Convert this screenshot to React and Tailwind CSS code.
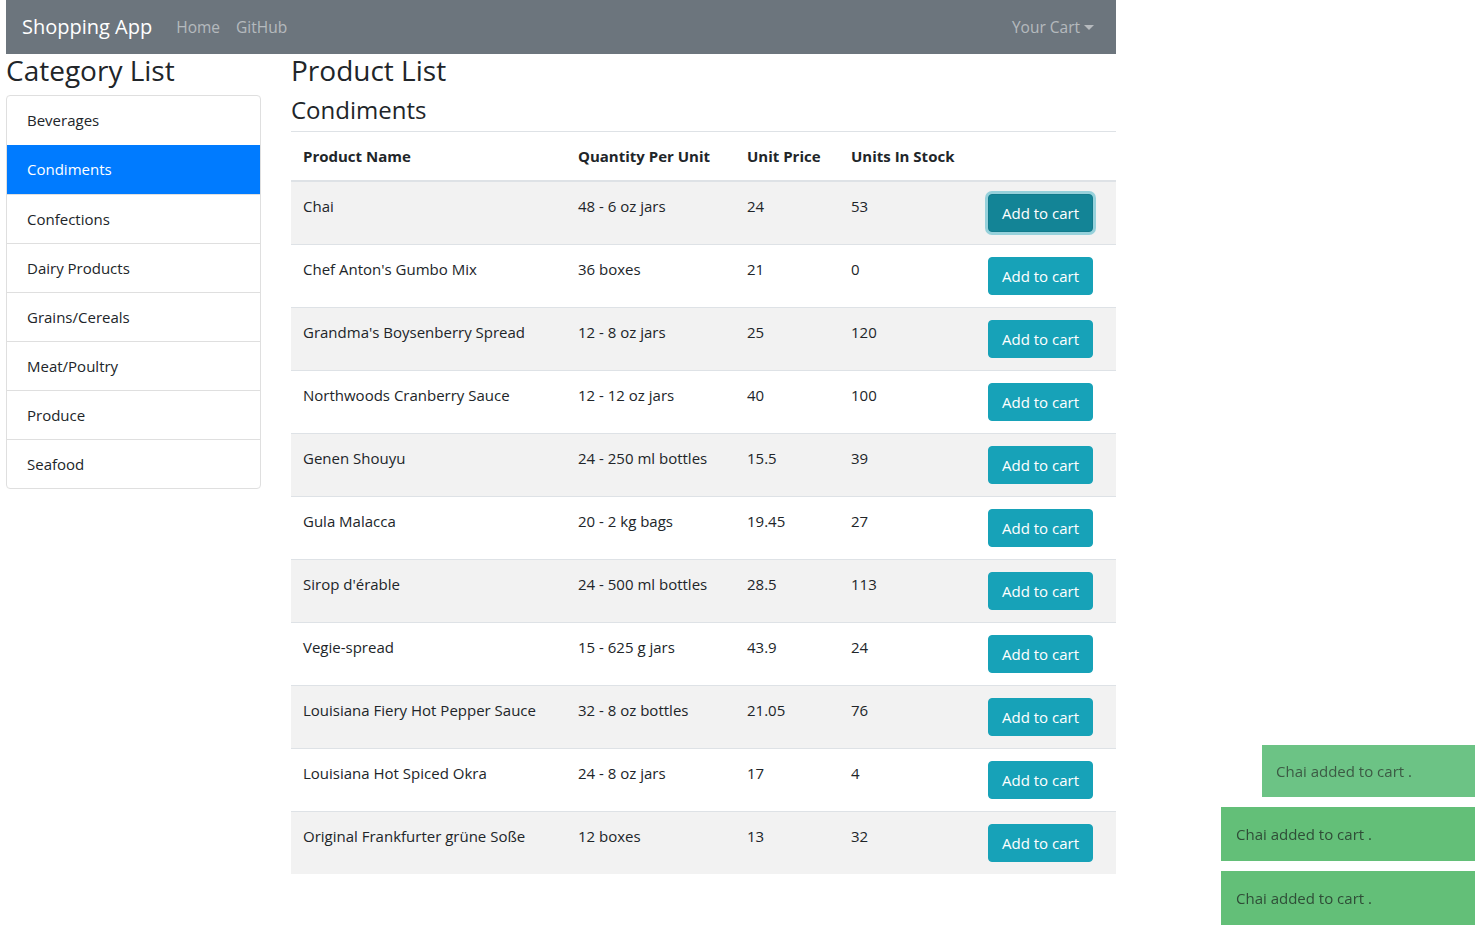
import React from 'react';

const categories = [
    'Beverages',
    'Condiments',
    'Confections',
    'Dairy Products',
    'Grains/Cereals',
    'Meat/Poultry',
    'Produce',
    'Seafood',
];

const products = [
    { name: 'Chai', qty: '48 - 6 oz jars', price: '24', stock: '53' },
    { name: "Chef Anton's Gumbo Mix", qty: '36 boxes', price: '21', stock: '0' },
    { name: "Grandma's Boysenberry Spread", qty: '12 - 8 oz jars', price: '25', stock: '120' },
    { name: 'Northwoods Cranberry Sauce', qty: '12 - 12 oz jars', price: '40', stock: '100' },
    { name: 'Genen Shouyu', qty: '24 - 250 ml bottles', price: '15.5', stock: '39' },
    { name: 'Gula Malacca', qty: '20 - 2 kg bags', price: '19.45', stock: '27' },
    { name: "Sirop d'érable", qty: '24 - 500 ml bottles', price: '28.5', stock: '113' },
    { name: 'Vegie-spread', qty: '15 - 625 g jars', price: '43.9', stock: '24' },
    { name: 'Louisiana Fiery Hot Pepper Sauce', qty: '32 - 8 oz bottles', price: '21.05', stock: '76' },
    { name: 'Louisiana Hot Spiced Okra', qty: '24 - 8 oz jars', price: '17', stock: '4' },
    { name: 'Original Frankfurter grüne Soße', qty: '12 boxes', price: '13', stock: '32' },
];

const Navbar = () => (
    <nav className="h-[54px] bg-[#6c757d] flex items-center justify-between px-4">
        <div className="flex items-center">
            <span className="text-[20px] text-white mr-4">Shopping App</span>
            <a className="text-white/50 px-2 text-[15.5px]">Home</a>
            <a className="text-white/50 px-2 text-[15.5px]">GitHub</a>
        </div>
        <div className="flex items-center text-white/50 pr-[6px] text-[15.5px]">
            Your Cart
            <span className="ml-[4px] mt-[1px] w-0 h-0 border-l-[5px] border-r-[5px] border-t-[5px] border-l-transparent border-r-transparent border-t-white/50" />
        </div>
    </nav>
);

const CategoryList = () => (
    <div className="w-[255px] shrink-0">
        <h3 className="text-[28px] font-medium leading-[1.2] mb-[7px]">Category List</h3>
        <ul className="border border-[#dfdfdf] rounded-[4px] overflow-hidden">
            {categories.map((c) => (
                <li
                    key={c}
                    className={
                        c === 'Condiments'
                            ? 'h-[49px] px-5 flex items-center bg-[#007bff] text-white'
                            : 'h-[49px] px-5 flex items-center border-t border-[#dfdfdf] first:border-t-0'
                    }
                >
                    {c}
                </li>
            ))}
        </ul>
    </div>
);

const ProductTable = () => (
    <div className="flex-1 ml-[30px]">
        <h3 className="text-[28px] font-medium leading-[1.2] mb-2">Product List</h3>
        <h4 className="text-[24px] font-medium leading-[1.2] mb-[7px]">Condiments</h4>
        <table className="w-full border-collapse text-left">
            <thead>
                <tr className="border-t border-b-2 border-[#dee2e6]">
                    <th className="w-[275px] p-3 h-[49px] font-bold">Product Name</th>
                    <th className="w-[169px] p-3 font-bold">Quantity Per Unit</th>
                    <th className="w-[104px] p-3 font-bold">Unit Price</th>
                    <th className="w-[137px] p-3 font-bold">Units In Stock</th>
                    <th className="p-3"></th>
                </tr>
            </thead>
            <tbody>
                {products.map((p, i) => (
                    <tr key={p.name} className={i % 2 === 0 ? 'bg-[#f2f2f2] border-t border-[#dee2e6]' : 'border-t border-[#dee2e6]'}>
                        <td className="p-3 align-top">{p.name}</td>
                        <td className="p-3 align-top">{p.qty}</td>
                        <td className="p-3 align-top">{p.price}</td>
                        <td className="p-3 align-top">{p.stock}</td>
                        <td className="p-3 align-top">
                            <button
                                className={
                                    i === 0
                                        ? 'h-[38px] px-[13px] rounded-[4px] text-white bg-[#138496] border border-[#117a8b] shadow-[0_0_0_3px_rgba(58,176,195,0.5)]'
                                        : 'h-[38px] px-[13px] rounded-[4px] text-white bg-[#17a2b8] border border-[#17a2b8]'
                                }
                            >
                                Add to cart
                            </button>
                        </td>
                    </tr>
                ))}
            </tbody>
        </table>
    </div>
);

const Toasts = () => (
    <div className="fixed right-0 bottom-[2px] flex flex-col items-end gap-[10px]">
        <div className="w-[213px] h-[52px] bg-[#6cc385] text-[#3c5a44] flex items-center px-[14px]">
            Chai added to cart .
        </div>
        <div className="w-[254px] h-[54px] bg-[#63bf78] text-[#2f4d37] flex items-center px-[15px]">
            Chai added to cart .
        </div>
        <div className="w-[254px] h-[54px] bg-[#63bf78] text-[#2f4d37] flex items-center px-[15px]">
            Chai added to cart .
        </div>
    </div>
);

export default function App() {
    return (
        <div className="min-h-[927px] bg-white text-[#212529] text-[15px] leading-[24px] font-['Open_Sans',sans-serif]">
            <div className="w-[1110px] ml-[6px]">
                <Navbar />
                <div className="flex">
                    <CategoryList />
                    <ProductTable />
                </div>
            </div>
            <Toasts />
        </div>
    );
}
